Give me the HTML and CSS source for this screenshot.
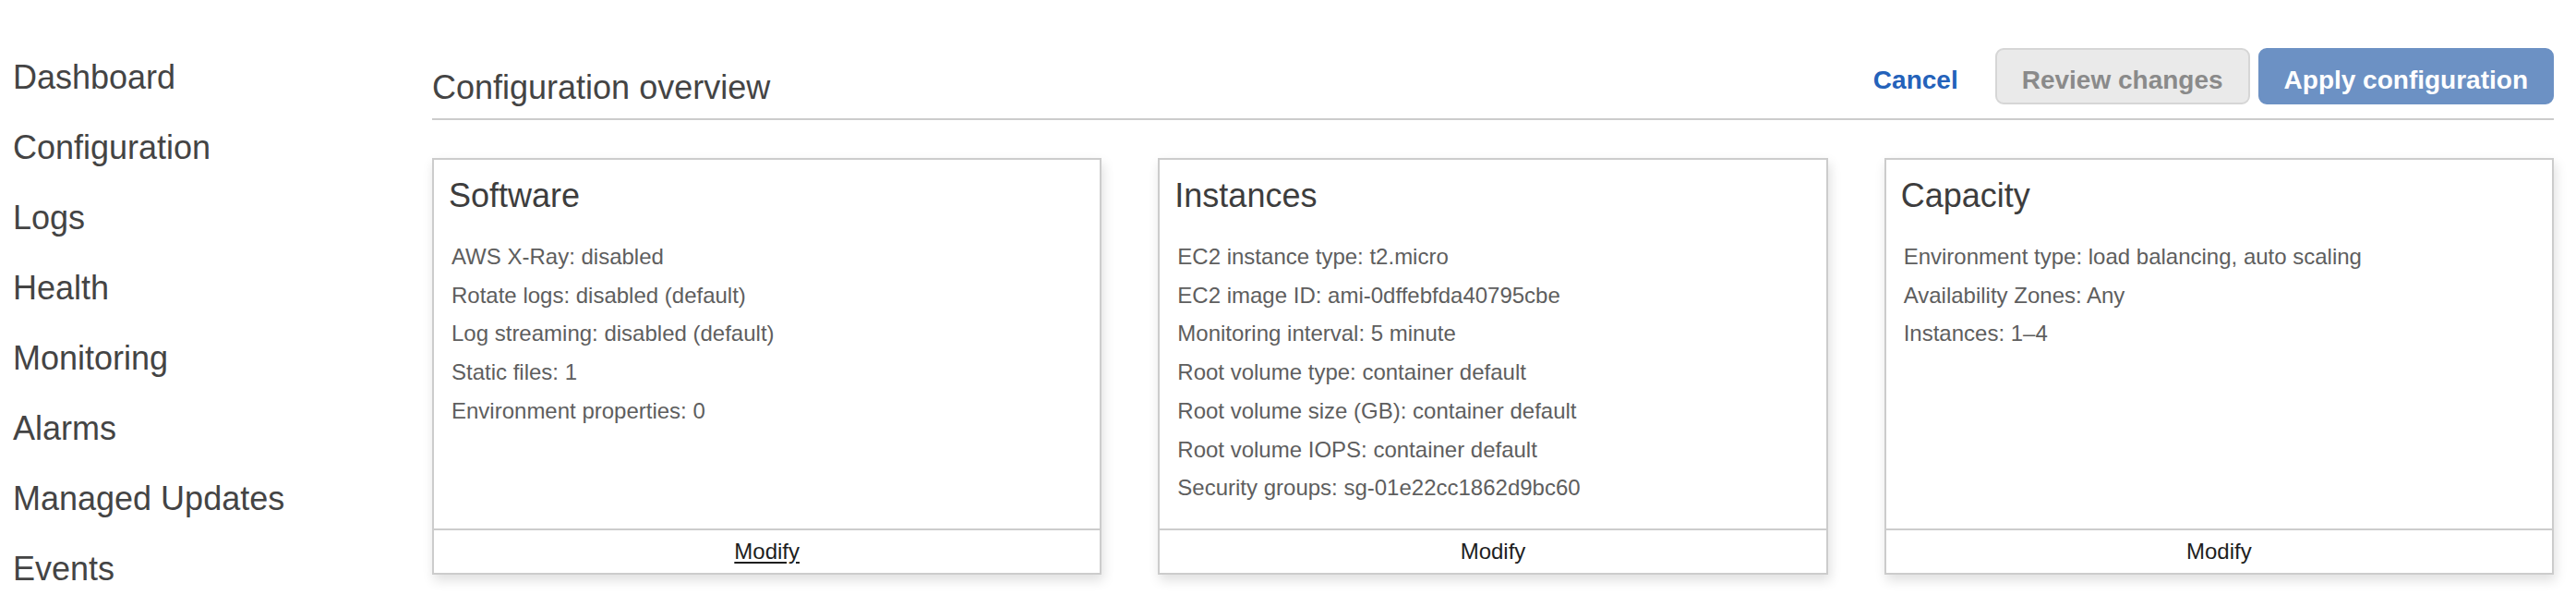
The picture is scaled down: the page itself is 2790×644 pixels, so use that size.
FILE: index.html
```html
<!DOCTYPE html>
<html lang="en">
<head>
<meta charset="utf-8">
<title>Configuration overview</title>
<link rel="stylesheet" href="styles.css">
</head>
<body>
<div class="layout">
  <nav class="sidebar">
    <div class="nav-item">Dashboard</div>
    <div class="nav-item">Configuration</div>
    <div class="nav-item">Logs</div>
    <div class="nav-item">Health</div>
    <div class="nav-item">Monitoring</div>
    <div class="nav-item">Alarms</div>
    <div class="nav-item">Managed Updates</div>
    <div class="nav-item">Events</div>
  </nav>
  <main class="main">
    <header class="page-header">
      <h1 class="page-title">Configuration overview</h1>
      <div class="actions">
        <span class="btn btn-link">Cancel</span>
        <span class="btn btn-secondary">Review changes</span>
        <span class="btn btn-primary">Apply configuration</span>
      </div>
    </header>
    <section class="cards">
      <article class="card">
        <div class="card-body">
          <h2 class="card-title">Software</h2>
          <ul class="props">
            <li>AWS X-Ray: disabled</li>
            <li>Rotate logs: disabled (default)</li>
            <li>Log streaming: disabled (default)</li>
            <li>Static files: 1</li>
            <li>Environment properties: 0</li>
          </ul>
        </div>
        <div class="card-footer"><span class="modify modify-hover">Modify</span></div>
      </article>
      <article class="card">
        <div class="card-body">
          <h2 class="card-title">Instances</h2>
          <ul class="props">
            <li>EC2 instance type: t2.micro</li>
            <li>EC2 image ID: ami-0dffebfda40795cbe</li>
            <li>Monitoring interval: 5 minute</li>
            <li>Root volume type: container default</li>
            <li>Root volume size (GB): container default</li>
            <li>Root volume IOPS: container default</li>
            <li>Security groups: sg-01e22cc1862d9bc60</li>
          </ul>
        </div>
        <div class="card-footer"><span class="modify">Modify</span></div>
      </article>
      <article class="card">
        <div class="card-body">
          <h2 class="card-title">Capacity</h2>
          <ul class="props">
            <li>Environment type: load balancing, auto scaling</li>
            <li>Availability Zones: Any</li>
            <li>Instances: 1–4</li>
          </ul>
        </div>
        <div class="card-footer"><span class="modify">Modify</span></div>
      </article>
    </section>
  </main>
</div>
</body>
</html>
```
FILE: styles.css
```css
html, body {
  margin: 0;
  padding: 0;
  background: #ffffff;
}

body {
  font-family: "Liberation Sans", Arial, Helvetica, sans-serif;
  color: #444444;
  overflow: hidden;
}

.layout {
  display: flex;
  align-items: flex-start;
}

/* Sidebar */
.sidebar {
  flex: none;
  width: 468px;
  box-sizing: border-box;
  padding: 46px 0 0 14px;
}

.nav-item {
  font-size: 36px;
  line-height: 76px;
  color: #444444;
  white-space: nowrap;
}

/* Main */
.main {
  flex: 1;
  min-width: 0;
  margin-right: 24px;
}

.page-header {
  display: flex;
  align-items: flex-end;
  padding: 52px 0 15px 0;
  border-bottom: 2px solid #cccccc;
}

.page-title {
  flex: 1;
  margin: 0;
  font-size: 36px;
  line-height: 36px;
  font-weight: normal;
  color: #444444;
}

.actions {
  display: flex;
  align-items: center;
}

.btn {
  display: inline-block;
  box-sizing: border-box;
  font-size: 28px;
  font-weight: bold;
  line-height: 49px;
  padding: 8px 0 0 0;
  border: 2px solid transparent;
  border-radius: 9px;
  white-space: nowrap;
}

.btn-link {
  color: #2462ba;
  margin-right: 38px;
  padding-left: 0;
  padding-right: 0;
}

.btn-secondary {
  background: #eaeaea;
  border-color: #d6d6d6;
  color: #8a8a8a;
  padding-left: 27px;
  padding-right: 27px;
  margin-right: 9px;
}

.btn-primary {
  background: #6c91c4;
  border-color: #6c91c4;
  color: #ffffff;
  padding-left: 26px;
  padding-right: 26px;
}

/* Cards */
.cards {
  display: grid;
  grid-template-columns: repeat(3, 1fr);
  column-gap: 61px;
  margin-top: 41px;
}

.card {
  display: flex;
  flex-direction: column;
  border: 2px solid #cccccc;
  background: #ffffff;
  box-shadow: 2px 6px 12px rgba(0, 0, 0, 0.13);
}

.card-body {
  flex: 1;
  padding: 19px 18px 23px 16px;
}

.card-title {
  margin: 0;
  font-size: 36px;
  line-height: 40px;
  font-weight: normal;
  color: #3d3d3d;
}

.props {
  list-style: none;
  margin: 25px 0 0 0;
  padding: 0 0 0 3px;
}

.props li {
  font-size: 24px;
  line-height: 41.7px;
  color: #5e5e5e;
  white-space: nowrap;
}

.card-footer {
  border-top: 2px solid #cccccc;
  height: 46px;
  line-height: 46px;
  text-align: center;
}

.modify {
  font-size: 24px;
  color: #1e1e1e;
}

.modify-hover {
  text-decoration: underline;
  text-underline-offset: 3px;
}
```
